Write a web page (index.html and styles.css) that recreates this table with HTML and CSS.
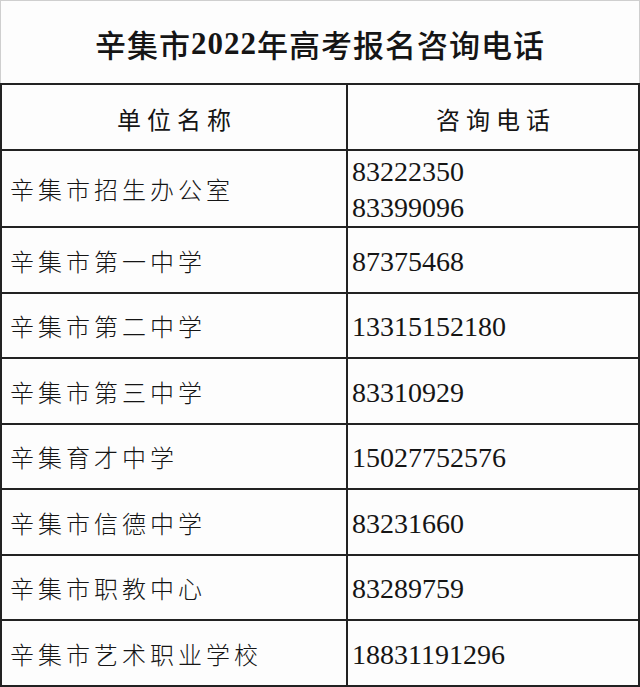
FILE: index.html
```html
<!DOCTYPE html>
<html lang="zh-CN">
<head>
<meta charset="utf-8">
<title>辛集市2022年高考报名咨询电话</title>
<link rel="stylesheet" href="styles.css">
</head>
<body>
<div class="page">
  <div class="title">辛集市<span class="year">2022</span>年高考报名咨询电话</div>
  <div class="table">
    <div class="cell head">单位名称</div>
    <div class="cell head">咨询电话</div>
    <div class="cell name">辛集市招生办公室</div>
    <div class="cell phone multi"><span>83222350</span><span>83399096</span></div>
    <div class="cell name">辛集市第一中学</div>
    <div class="cell phone">87375468</div>
    <div class="cell name">辛集市第二中学</div>
    <div class="cell phone">13315152180</div>
    <div class="cell name">辛集市第三中学</div>
    <div class="cell phone">83310929</div>
    <div class="cell name">辛集育才中学</div>
    <div class="cell phone">15027752576</div>
    <div class="cell name">辛集市信德中学</div>
    <div class="cell phone">83231660</div>
    <div class="cell name">辛集市职教中心</div>
    <div class="cell phone">83289759</div>
    <div class="cell name">辛集市艺术职业学校</div>
    <div class="cell phone">18831191296</div>
  </div>
</div>
</body>
</html>
```

FILE: styles.css
```css
* { box-sizing: border-box; }
html, body { margin: 0; padding: 0; background: #fdfdfd; }
.page {
  width: 640px;
  height: 687px;
  display: flex;
  flex-direction: column;
  color: #151515;
  font-family: "Liberation Serif", "Noto Sans CJK SC", serif;
}
.title {
  height: 83px;
  border: 1px solid #cfcfcf;
  border-bottom: none;
  display: flex;
  align-items: center;
  justify-content: center;
  font-size: 31px;
  font-weight: 500;
  letter-spacing: 1px;
  padding-top: 3px;
}
.year {
  font-weight: 700;
}
.table {
  display: grid;
  grid-template-columns: 346px 1fr;
  grid-template-rows: 66px 77px 66px 65px 66px 65px 66px 65px 66px;
  border-top: 2px solid #222;
  border-left: 2px solid #222;
  width: 640px;
}
.cell {
  border-right: 2px solid #222;
  border-bottom: 2px solid #222;
  display: flex;
  align-items: center;
}
.head {
  justify-content: center;
  font-family: "Noto Sans CJK SC", sans-serif;
  font-size: 24px;
  letter-spacing: 6px;
  font-weight: 400;
  padding-left: 6px;
  padding-top: 2px;
}
.name {
  font-family: "Noto Sans CJK SC", sans-serif;
  font-size: 24px;
  letter-spacing: 4px;
  padding-left: 8px;
  font-weight: 300;
}
.phone {
  font-family: "Liberation Serif", serif;
  font-size: 28px;
  padding-left: 4px;
  padding-top: 3px;
}
.multi {
  flex-direction: column;
  align-items: flex-start;
  justify-content: center;
  line-height: 36px;
}
```
